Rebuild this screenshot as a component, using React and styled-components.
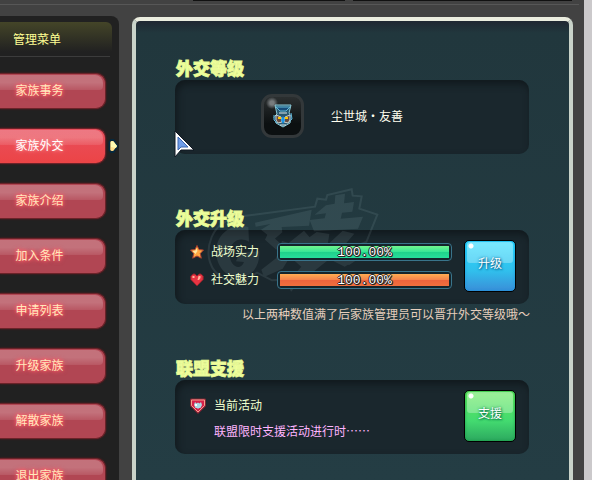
import React from 'react';
import styled, { createGlobalStyle, css } from 'styled-components';

const GlobalStyle = createGlobalStyle`
  * { box-sizing: border-box; }
  body {
    margin: 0;
    background: #424242;
    font-family: "Liberation Sans", "Noto Sans CJK SC", sans-serif;
    font-size: 12px;
    line-height: 16px;
  }
  button { font: inherit; cursor: pointer; }
  h1, h2, p, ul { margin: 0; padding: 0; font: inherit; }
  svg { flex: none; }
`;

const Page = styled.div`
  display: flex;
  flex-direction: column;
  height: 100vh;
  overflow: hidden;
  border-right: 8px solid #cbc9cb;
  background: #424242;
`;

const TopBar = styled.div`
  flex: none;
  display: flex;
  gap: 8px;
  height: 5px;
  margin-right: 5px;
  padding: 0 7px 0 193px;
  border-bottom: 1px solid #575757;
`;

const TopSlot = styled.span`
  flex: ${(p) => p.$grow} 1 0;
  height: 1px;
  background: #111;
`;

const Body = styled.div`
  flex: 1;
  min-height: 0;
  display: flex;
  gap: 13px;
  padding: 11px 11px 0 0;
`;

const Sidebar = styled.nav`
  flex: none;
  width: 119px;
  padding-top: 6px;
  border-radius: 0 8px 0 0;
  background: #212121;
`;

const MenuTitle = styled.h1`
  margin-right: 7px;
  padding: 10px 0 8px 13px;
  border-radius: 0 6px 0 0;
  background: linear-gradient(#444528, #212121 88%);
  color: #ffff94;
`;

const MenuList = styled.ul`
  display: grid;
  gap: 19px;
  margin-right: 9px;
  padding-top: 16px;
  border-top: 1px solid #3c3c3c;
  list-style: none;
`;

const MenuItem = styled.li`
  display: flex;
  align-items: center;
  gap: 2px;
  margin-right: -9px;
`;

const MenuButton = styled.button`
  position: relative;
  width: 106px;
  height: 36px;
  padding: 0 26px 0 0;
  border: 1px solid #6b2329;
  border-left: 0;
  border-radius: 0 10px 10px 0;
  background: #b14653;
  box-shadow: 0 0 2px #6b1a20;
  color: #ffe9bd;
  text-shadow: 0 0 3px #ff5c68, 0 0 4px #ff5c68, 0 0 5px #ff5c68;
  ${(p) => p.$active && css`
    background: linear-gradient(#e8505e, #ec4446);
    color: #fff;
    text-shadow: 0 0 3px #ff8b90, 0 0 5px #ff8b90;
  `}
  &::before {
    content: "";
    position: absolute;
    inset: 1px 2px auto 0;
    height: 15px;
    border-radius: 0 8px 4px 0;
    background: linear-gradient(#ffffff3c 50%, #ffffff18);
  }
`;

const ButtonLabel = styled.span`
  position: relative;
`;

const Panel = styled.main`
  flex: 1;
  min-width: 0;
  display: flex;
  flex-direction: column;
  gap: 55px;
  margin-top: 1px;
  padding: 38px 40px 0 39px;
  border: 4px solid #c9d3c9;
  border-top-color: #ebeddf;
  border-bottom: 0;
  border-radius: 8px 8px 0 0;
  background: linear-gradient(#202732, #21373d 12px, #243d44);
`;

const Section = styled.section`
  position: relative;
`;

const SectionTitle = styled.h2`
  position: relative;
  height: 21px;
  padding-left: 1px;
  color: #efff9c;
  font-family: "Noto Sans CJK SC", sans-serif;
  font-size: 17px;
  font-weight: 900;
  line-height: 18px;
  -webkit-text-stroke: 1px #e6f895;
`;

const Card = styled.div`
  display: flex;
  align-items: center;
  height: 74px;
  padding: 10px 13px 12px 15px;
  border-radius: 10px;
  background: #1a272d;
  box-shadow: inset 2px 4px 7px #11191d;
`;

const Emblem = styled.div`
  display: grid;
  place-items: center;
  width: 43px;
  height: 44px;
  margin: 0 27px 0 71px;
  border: 3px solid #33383a;
  border-radius: 11px;
  background:
    radial-gradient(circle at 8px 6px, #777b7d 0 2px, #4d515300 6px),
    linear-gradient(#2b2f30, #0c1011 70%);
`;

const Rank = styled.p`
  padding-top: 2px;
  color: #fffff0;
`;

const Stats = styled.div`
  position: relative;
  flex: 1;
  display: grid;
  gap: 10px;
`;

const StatRow = styled.div`
  display: flex;
  align-items: center;
  height: 18px;
`;

const StatName = styled.span`
  width: 66px;
  margin-left: 7px;
  color: #efffce;
`;

const Track = styled.div`
  flex: 1;
  height: 18px;
  margin-right: 12px;
  padding: 2px;
  border: 1px solid #39748b;
  border-radius: 4px;
  background: #14242b;
`;

const Fill = styled.div`
  height: 12px;
  background: ${(p) => p.$tone === 'green'
    ? 'linear-gradient(#72f58d, #35e698 50%, #1fd28a 51%, #27dd9c)'
    : 'linear-gradient(#ffad52, #f4814a 50%, #eb643d 51%, #f06f3d)'};
  color: #fff;
  font-family: "Liberation Mono", monospace;
  font-size: 13px;
  line-height: 13px;
  text-align: center;
  text-shadow: 1px 0 #222, -1px 0 #222, 0 1px #222, 0 -1px #222, 1px 1px #222;
`;

const TONES = {
  blue: css`
    background: linear-gradient(#29dcff, #31bfec 60%, #3a8ed8);
    box-shadow: inset 0 0 3px #1494d8;
    text-shadow: 0 0 3px #086694, 1px 1px 2px #086694;
  `,
  green: css`
    background: linear-gradient(#62e959, #43da70 60%, #2ca85f);
    box-shadow: inset 0 0 3px #169c43;
    text-shadow: 0 0 3px #087b4a, 1px 1px 2px #087b4a;
  `,
};

const ActionButton = styled.button`
  position: relative;
  flex: none;
  width: 52px;
  height: 52px;
  padding: 0 0 4px;
  border: 1px solid #000;
  border-radius: 5px;
  color: #fff;
  ${(p) => TONES[p.$tone]}
  &::before {
    content: "";
    position: absolute;
    inset: 1px 2px auto;
    height: 21px;
    border-radius: 3px;
    background:
      radial-gradient(circle at 4px 4px, #fff 0 2px, #fff0 3px),
      linear-gradient(#ffffff60, #ffffff48);
  }
`;

const Hint = styled.p`
  margin: 3px -1px -19px 0;
  color: #e7cfbd;
  text-align: right;
  white-space: nowrap;
`;

const Activity = styled.div`
  flex: 1;
  display: grid;
  grid-template-columns: 16px 1fr;
  gap: 9px 8px;
  align-items: center;
  padding-top: 4px;
`;

const ActivityName = styled.p`
  color: #efffce;
`;

const ActivityNote = styled.p`
  grid-column: 2;
  height: 16px;
  color: #ffb5ff;
  font-family: "Noto Sans CJK SC", sans-serif;
`;

const Watermark = styled.svg`
  position: absolute;
  top: -27px;
  left: 25px;
  pointer-events: none;
`;

const Pointer = styled.svg`
  position: absolute;
  top: 71px;
  left: -1px;
  pointer-events: none;
`;

const Crest = () => (
  <Watermark width="190" height="115" viewBox="0 0 570 345" fill="#b9d3d8" opacity="0.1" aria-hidden="true">
    <path
      d="M125 103 345 74l7-24 26 3 4-14 73-17 3 19 27 2-7 37 54 18-33 82-30 11 8 35-30 20-58-18-70 44-45 52-15-31-43 2-45-23-45 30-50-10C28 270 14 217 35 165c15-35 47-55 90-62z"
      fill="none" stroke="#b9d3d8" strokeWidth="6"
    />
    <path d="M145 135c-47-12-91 17-96 65-5 55 37 96 81 85 32-8 50-39 48-77l-59 3-11 27 24 2c-10 28-45 15-43-28 2-36 31-49 58-33z" />
    <path d="m165 122 170-39-8 48-82 4 2 16-26 22-38-30 28-17-44 8z" />
    <path d="m205 152 38 34-14 17-34-30zM312 146l22 26-42 32 38 30-22 24-38-34-22 36-56 25-8-22 44-34 18-52 20 6z" />
    <path d="m378 70 26-5 2-25 29-5-3 29 30-4-5 29-31 3-4 18 67-6-15 36-132 8-13-34 45-5 4-15-34 4z" />
    <path d="m350 150 38 6-5 32 45-42 35 9-45 52 46 29-30 18-46-23-65 52-33-13 51-57-29-35z" />
  </Watermark>
);

const Star = () => (
  <svg width="14" height="14" viewBox="0 0 14 14" aria-hidden="true">
    <path d="M7 .5 9 4.600l4.500.5-3.200 3.300 1 4.800L7 11l-4.300 2.200 1-4.800L.5 5.100 5 4.600z" fill="#ffa842" stroke="#a83e31" />
    <path d="M6.500 3 7.500 6l-2 3-3-3 3-.5z" fill="#ffe6a1" />
  </svg>
);

const Heart = () => (
  <svg width="14" height="14" viewBox="0 0 14 14" aria-hidden="true">
    <path d="M7 13 .8 6.500V3L3 1h2l2 2 2-2h2l2.200 2v3.500z" fill="#e73443" stroke="#84232b" />
    <path d="M2.500 3h2v2h-2zM8.500 3h2v2l-1.500 2H7.500z" fill="#ffb39b" />
  </svg>
);

const Shield = () => (
  <svg width="16" height="16" viewBox="0 0 16 16" aria-hidden="true">
    <path d="M.5 1h15v7L8 15.500.5 8z" fill="#d6214a" stroke="#7b2832" />
    <path d="M1.500 2h13v5.500L8 14 1.500 7.500z" fill="none" stroke="#f2a08c" />
    <path d="m5 4 1.500 1.500L8 4.500l1.500 1L11 4l1 3-1.500 3H9l-1 1-1-1H5.500L4 7z" fill="#a9dce6" />
    <path d="M5 6h2v2H5z" fill="#fff" />
  </svg>
);

const Owl = () => (
  <svg width="22" height="24" viewBox="0 0 22 24" aria-hidden="true">
    <path d="M3 1h16l-2 8 2 3-1 7-7 4-7-4-2-6 3-3z" fill="#29576f" stroke="#8ccbd8" />
    <path d="M4 3h14l-4 4H8zM2 11v5l3 3M19 9l1 6-3 3" fill="#164b79" stroke="#62b8d6" />
    <path d="m4 11 5 2 1 5-4 1-2-3zm14 0-5 2-1 5 4 1 2-3z" fill="#634b42" stroke="#c8d4d2" />
    <path d="M6 13h3v2H6zM13 13h3v2h-3z" fill="#ffc400" />
    <path d="m11 12 2 4-2 4-2-4z" fill="#1896e8" />
    <path d="M7 9h8M8 21h6" stroke="#dceced" />
  </svg>
);

const Arrow = () => (
  <svg width="11" height="16" viewBox="0 0 11 16" aria-hidden="true">
    <path d="M3 2h2.500L9.500 8l-4 6H3L1.500 12V4z" fill="#ffcf7c" stroke="#06283d" strokeWidth="2" />
    <path d="M2.500 3.500h3L9 8l-3.500 4.500h-3z" fill="#ffdf8a" />
    <path d="M3 3.500h2.500L9 8l-1 2-5-1z" fill="#fffbb2" />
  </svg>
);

const menu = ['家族事务', '家族外交', '家族介绍', '加入条件', '申请列表', '升级家族', '解散家族', '退出家族'];

const stats = [
  { name: '战场实力', value: 100, tone: 'green', Icon: Star },
  { name: '社交魅力', value: 100, tone: 'orange', Icon: Heart },
];

export default function App() {
  return (
    <>
      <GlobalStyle />
      <Page>
        <TopBar><TopSlot $grow={152} /><TopSlot $grow={219} /></TopBar>
        <Body>
          <Sidebar>
            <MenuTitle>管理菜单</MenuTitle>
            <MenuList>
              {menu.map((label, i) => (
                <MenuItem key={label}>
                  <MenuButton type="button" $active={i === 1}>
                    <ButtonLabel>{label}</ButtonLabel>
                  </MenuButton>
                  {i === 1 && <Arrow />}
                </MenuItem>
              ))}
            </MenuList>
          </Sidebar>
          <Panel>
            <Section>
              <SectionTitle>外交等级</SectionTitle>
              <Card>
                <Emblem><Owl /></Emblem>
                <Rank>尘世城・友善</Rank>
              </Card>
              <Pointer width="22" height="30" viewBox="0 0 22 30" aria-hidden="true">
                <path d="M1 1v26l6-7h13z" fill="#fff" stroke="#111823" />
                <path d="M4 7v13l3-3h7z" fill="#6f9de8" stroke="#3d66ad" />
              </Pointer>
            </Section>
            <Section>
              <Crest />
              <SectionTitle>外交升级</SectionTitle>
              <Card>
                <Stats>
                  {stats.map(({ name, value, tone, Icon }) => (
                    <StatRow key={name}>
                      <Icon />
                      <StatName>{name}</StatName>
                      <Track>
                        <Fill $tone={tone} style={{ width: `${value}%` }}>{value.toFixed(2)}%</Fill>
                      </Track>
                    </StatRow>
                  ))}
                </Stats>
                <ActionButton type="button" $tone="blue"><ButtonLabel>升级</ButtonLabel></ActionButton>
              </Card>
              <Hint>以上两种数值满了后家族管理员可以晋升外交等级哦～</Hint>
            </Section>
            <Section>
              <SectionTitle>联盟支援</SectionTitle>
              <Card>
                <Activity>
                  <Shield />
                  <ActivityName>当前活动</ActivityName>
                  <ActivityNote>联盟限时支援活动进行时……</ActivityNote>
                </Activity>
                <ActionButton type="button" $tone="green"><ButtonLabel>支援</ButtonLabel></ActionButton>
              </Card>
            </Section>
          </Panel>
        </Body>
      </Page>
    </>
  );
}
